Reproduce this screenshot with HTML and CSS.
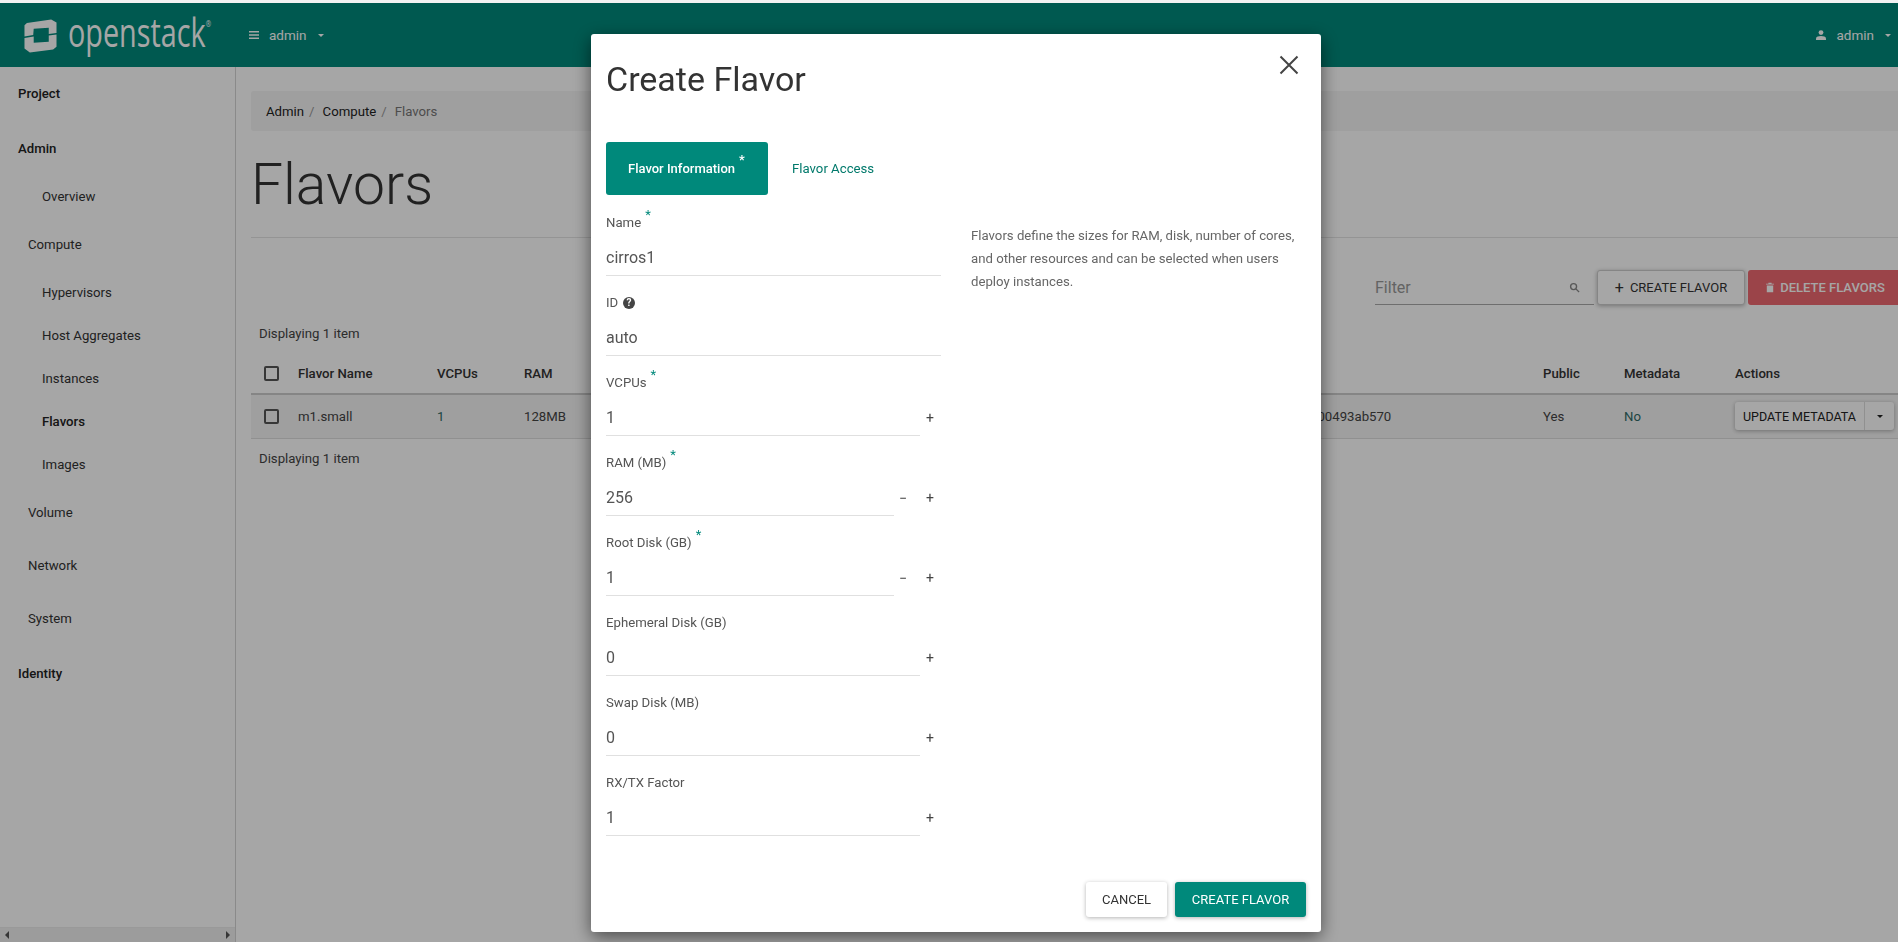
FILE: index.html
```html
<!DOCTYPE html>
<html>
<head>
  <title>Flavors - OpenStack Dashboard</title>
  <link rel="stylesheet" href="styles.css">
</head>
<body>

<div class="topstrip"></div>

<nav class="navbar">
  <a class="brand">
    <svg class="brand-icon" viewBox="0 0 34 35">
      <path d="M3 4.5 L28 1 L33.5 4 L33.5 15 L25.5 16 L25.5 9.5 L10 10.5 L9.5 17 L0.5 18.5 L0.5 7 Z"/>
      <path d="M0.5 20 L10 18.5 L10 25 L25.5 24 L25.5 17.5 L33.5 16.5 L33.5 29 L30 32 L6 35 L0.5 31 Z"/>
    </svg>
    <span class="brand-name">openstack<sup>&reg;</sup></span>
  </a>
  <a class="nav-link project-picker">
    <svg class="nav-icon" viewBox="0 0 10 8"><path d="M0 0h10v1.6H0zM0 3.2h10v1.6H0zM0 6.4h10V8H0z"/></svg>
    <span>admin</span>
    <i class="caret"></i>
  </a>
  <a class="nav-link user-menu">
    <svg class="nav-icon" viewBox="0 0 10 10"><circle cx="5" cy="2.6" r="2.4"/><path d="M0 10V8.4C0 6.8 2.6 6 5 6s5 .8 5 2.4V10z"/></svg>
    <span>admin</span>
    <i class="caret"></i>
  </a>
</nav>

<div class="wrapper">
  <aside class="sidebar">
    <ul class="side-nav">
      <li class="lvl0 first">Project</li>
      <li class="lvl0">Admin</li>
      <li class="lvl2 opener">Overview</li>
      <li class="lvl1">Compute</li>
      <li class="lvl2 opener">Hypervisors</li>
      <li class="lvl2">Host Aggregates</li>
      <li class="lvl2">Instances</li>
      <li class="lvl2 active">Flavors</li>
      <li class="lvl2">Images</li>
      <li class="lvl1">Volume</li>
      <li class="lvl1 wide">Network</li>
      <li class="lvl1 wide">System</li>
      <li class="lvl0">Identity</li>
    </ul>
    <div class="side-scroll">
      <i class="arrow-left"></i>
      <i class="arrow-right"></i>
    </div>
  </aside>

  <main class="content">
    <ol class="breadcrumb">
      <li>Admin</li>
      <li>Compute</li>
      <li class="current">Flavors</li>
    </ol>
    <h1 class="page-title">Flavors</h1>

    <div class="actions">
      <div class="filter">
        <span>Filter</span>
        <svg viewBox="0 0 24 24"><circle cx="10" cy="10" r="6.5"/><path d="M15 15l7 7"/></svg>
      </div>
      <button class="btn btn-create"><span class="plus">+</span>Create Flavor</button>
      <button class="btn btn-delete">
        <svg viewBox="0 0 10 12"><path d="M0 1.2h3V0h4v1.2h3v1.2H0zM1 3.4h8V12H1z"/></svg>
        Delete Flavors
      </button>
    </div>

    <p class="count">Displaying 1 item</p>

    <table class="flavors">
      <colgroup>
        <col class="c-check"><col class="c-name"><col class="c-vcpu"><col class="c-ram"><col class="c-under">
        <col class="c-id"><col class="c-pub"><col class="c-meta"><col class="c-act">
      </colgroup>
      <thead>
        <tr>
          <th><i class="check"></i></th>
          <th>Flavor Name</th>
          <th>VCPUs</th>
          <th>RAM</th>
          <th></th>
          <th></th>
          <th>Public</th>
          <th>Metadata</th>
          <th>Actions</th>
        </tr>
      </thead>
      <tbody>
        <tr>
          <td><i class="check"></i></td>
          <td>m1.small</td>
          <td class="num">1</td>
          <td>128MB</td>
          <td></td>
          <td class="id-cell"><span>900493ab570</span></td>
          <td>Yes</td>
          <td class="num">No</td>
          <td>
            <div class="split">
              <span class="split-main">Update Metadata</span>
              <span class="split-drop"><i class="caret"></i></span>
            </div>
          </td>
        </tr>
      </tbody>
    </table>

    <p class="count">Displaying 1 item</p>
  </main>
</div>

<div class="backdrop"></div>

<div class="modal">
  <header class="modal-head">
    <h2>Create Flavor</h2>
    <svg class="close" viewBox="0 0 20 20"><path d="M1.5 1.5l17 17M18.5 1.5l-17 17"/></svg>
  </header>

  <div class="tabs">
    <a class="tab active">Flavor Information<sup>*</sup></a>
    <a class="tab">Flavor Access</a>
  </div>

  <div class="modal-body">
    <form class="fields">
      <div class="field">
        <label>Name<sup>*</sup></label>
        <div class="control"><span class="value">cirros1</span></div>
      </div>
      <div class="field">
        <label>ID <svg class="help" viewBox="0 0 12 12"><circle cx="6" cy="6" r="6"/><text x="6" y="9.4" text-anchor="middle">?</text></svg></label>
        <div class="control"><span class="value">auto</span></div>
      </div>
      <div class="field">
        <label>VCPUs<sup>*</sup></label>
        <div class="control">
          <span class="value plus-only">1</span>
          <span class="stepper"><b>+</b></span>
        </div>
      </div>
      <div class="field">
        <label>RAM (MB)<sup>*</sup></label>
        <div class="control">
          <span class="value both">256</span>
          <span class="stepper"><b>&minus;</b><b>+</b></span>
        </div>
      </div>
      <div class="field">
        <label>Root Disk (GB)<sup>*</sup></label>
        <div class="control">
          <span class="value both">1</span>
          <span class="stepper"><b>&minus;</b><b>+</b></span>
        </div>
      </div>
      <div class="field">
        <label>Ephemeral Disk (GB)</label>
        <div class="control">
          <span class="value plus-only">0</span>
          <span class="stepper"><b>+</b></span>
        </div>
      </div>
      <div class="field">
        <label>Swap Disk (MB)</label>
        <div class="control">
          <span class="value plus-only">0</span>
          <span class="stepper"><b>+</b></span>
        </div>
      </div>
      <div class="field">
        <label>RX/TX Factor</label>
        <div class="control">
          <span class="value plus-only">1</span>
          <span class="stepper"><b>+</b></span>
        </div>
      </div>
    </form>
    <p class="help-text">Flavors define the sizes for RAM, disk, number of cores, and other resources and can be selected when users deploy instances.</p>
  </div>

  <footer class="modal-foot">
    <button class="btn btn-cancel">Cancel</button>
    <button class="btn btn-primary">Create Flavor</button>
  </footer>
</div>

</body>
</html>
```

FILE: styles.css
```css
* {
  margin: 0;
  padding: 0;
  box-sizing: border-box;
}

html, body {
  height: 100%;
  overflow: hidden;
}

body {
  font-family: Roboto, "Liberation Sans", sans-serif;
  font-size: 13.2px;
  color: #333;
  background-color: #fff;
  display: flex;
  flex-direction: column;
}

ul, ol {
  list-style: none;
}

i {
  display: block;
}

.topstrip {
  height: 3px;
  flex: none;
  background-color: #f2f2f2;
}

/* navbar */

.navbar {
  height: 64px;
  flex: none;
  display: flex;
  align-items: center;
  background-color: #00897b;
  color: #fff;
}

.brand {
  width: 249px;
  padding-left: 24px;
  display: flex;
  align-items: center;
  flex: none;
}

.brand-icon {
  width: 33px;
  height: 35px;
  fill: #fff;
  flex: none;
}

.brand-name {
  font-family: "Open Sans", sans-serif;
  font-size: 40px;
  line-height: 40px;
  margin-left: 11px;
  display: block;
  white-space: nowrap;
  transform: scaleX(.72);
  transform-origin: left center;
  position: relative;
  top: -3px;
}

.brand-name sup {
  font-size: 9px;
  vertical-align: 20px;
  line-height: 0;
}

.nav-link {
  display: flex;
  align-items: center;
  font-size: 13.5px;
}

.nav-icon {
  width: 10px;
  height: 10px;
  fill: #fff;
  margin-right: 10px;
}

.caret {
  width: 0;
  height: 0;
  border-left: 3px solid transparent;
  border-right: 3px solid transparent;
  border-top: 3px solid currentColor;
  margin-left: 11px;
}

.user-menu {
  margin-left: auto;
  padding-right: 7px;
}

/* sidebar */

.wrapper {
  flex: 1;
  display: flex;
  min-height: 0;
}

.sidebar {
  width: 236px;
  flex: none;
  display: flex;
  flex-direction: column;
  border-right: 1px solid #d4d4d4;
}

.side-nav {
  flex: 1;
  display: flex;
  flex-direction: column;
  padding-top: 17px;
}

.side-nav li {
  line-height: 20px;
  height: 20px;
}

.lvl0 {
  font-weight: 500;
  color: #222;
  padding-left: 18px;
  margin-top: 35px;
}

.lvl0.first {
  margin-top: 0;
}

.lvl1 {
  padding-left: 28px;
  margin-top: 28px;
}

.lvl1.wide {
  margin-top: 33px;
}

.lvl2 {
  padding-left: 42px;
  margin-top: 23px;
}

.lvl2.opener {
  margin-top: 28px;
}

.lvl2.active {
  font-weight: 500;
  color: #222;
}

.side-scroll {
  height: 15px;
  flex: none;
  display: flex;
  align-items: center;
  justify-content: space-between;
  padding: 0 5px;
  background-color: #f0f0f0;
  border-top: 1px solid #ececec;
}

.arrow-left, .arrow-right {
  width: 0;
  height: 0;
  border-top: 4px solid transparent;
  border-bottom: 4px solid transparent;
}

.arrow-left {
  border-right: 4px solid #555;
}

.arrow-right {
  border-left: 4px solid #555;
}

/* content */

.content {
  flex: 1;
  min-width: 0;
  padding: 24px 0 0 15px;
}

.breadcrumb {
  height: 40px;
  display: flex;
  align-items: center;
  padding-left: 15px;
  background-color: #f5f5f5;
  border-radius: 3px 0 0 3px;
  color: #222;
}

.breadcrumb li + li::before {
  content: "/";
  color: #999;
  padding: 0 8px 0 5px;
}

.breadcrumb .current {
  color: #777;
}

.page-title {
  font-size: 57px;
  font-weight: 300;
  line-height: 66px;
  padding: 21px 0 19px 0;
  border-bottom: 1px solid #e4e4e4;
  color: #333;
}

.actions {
  display: flex;
  justify-content: flex-end;
  align-items: stretch;
  height: 35px;
  margin-top: 32px;
  margin-right: -10px;
}

.filter {
  width: 219px;
  margin-right: 3px;
  display: flex;
  align-items: center;
  justify-content: space-between;
  font-size: 16px;
  color: #999;
  border-bottom: 1px solid #aaa;
}

.filter svg {
  width: 11px;
  height: 11px;
  fill: none;
  stroke: #888;
  stroke-width: 3;
  margin-right: 14px;
}

.btn {
  font-family: inherit;
  font-size: 13px;
  text-transform: uppercase;
  border: none;
  border-radius: 3px;
  background-color: #fff;
  color: #333;
  box-shadow: 0 1px 4px rgba(0, 0, 0, .3);
  display: flex;
  align-items: center;
  justify-content: center;
  white-space: nowrap;
}

.btn-create {
  width: 148px;
  margin-right: 3px;
  border: 1px solid #ccc;
}

.plus {
  font-size: 16px;
  margin-right: 6px;
  line-height: 1;
}

.btn-delete {
  width: 160px;
  padding-right: 5px;
  background-color: #ee6970;
  color: #fff;
  font-weight: 500;
  box-shadow: none;
}

.btn-delete svg {
  width: 8px;
  height: 11px;
  fill: #fff;
  margin-right: 6px;
}

.count {
  width: fit-content;
  padding-left: 8px;
  margin-top: 21px;
  line-height: 16px;
  color: #444;
}

.flavors {
  table-layout: fixed;
  width: 1647px;
  border-collapse: collapse;
  margin-top: 12px;
}

.c-check { width: 47px; }
.c-name { width: 139px; }
.c-vcpu { width: 87px; }
.c-ram { width: 100px; }
.c-under { width: 521px; }
.c-id { width: 398px; }
.c-pub { width: 81px; }
.c-meta { width: 111px; }
.c-act { width: 163px; }

.flavors th {
  height: 40px;
  text-align: left;
  font-weight: 500;
  color: #333;
  white-space: nowrap;
  border-bottom: 2px solid #ccc;
  vertical-align: middle;
}

.flavors td {
  height: 44px;
  background-color: #f5f5f5;
  border-bottom: 1px solid #ddd;
  color: #444;
  white-space: nowrap;
}

.flavors td.num {
  color: #2f6b66;
}

/* only the end of the id shows past the modal */
.flavors td.id-cell {
  padding-left: 165px;
}

.flavors th:first-child, .flavors td:first-child {
  padding-left: 13px;
}

.check {
  width: 15px;
  height: 15px;
  border: 2px solid #555;
  border-radius: 2px;
}

.split {
  width: 159px;
  height: 28px;
  display: flex;
  border-radius: 3px;
  background-color: #fff;
  color: #222;
  box-shadow: 0 1px 4px rgba(0, 0, 0, .3);
  text-transform: uppercase;
  font-size: 12.5px;
}

.split-main {
  width: 130px;
  display: flex;
  align-items: center;
  justify-content: center;
  border-right: 1px solid #ddd;
}

.split-drop {
  flex: 1;
  display: flex;
  align-items: center;
  justify-content: center;
}

.split-drop .caret {
  margin-left: 0;
}

.flavors + .count {
  margin-top: 12px;
}

/* modal */

.backdrop {
  position: fixed;
  top: 3px;
  left: 0;
  right: 0;
  bottom: 0;
  background-color: rgba(0, 0, 0, .35);
}

.modal {
  position: fixed;
  top: 34px;
  left: 591px;
  width: 730px;
  height: 898px;
  display: flex;
  flex-direction: column;
  padding: 0 15px;
  background-color: #fff;
  border-radius: 3px;
  box-shadow: 0 5px 18px rgba(0, 0, 0, .55);
}

.modal-head {
  height: 108px;
  flex: none;
  display: flex;
  justify-content: space-between;
  align-items: flex-start;
}

.modal-head h2 {
  font-size: 34px;
  font-weight: 400;
  line-height: 40px;
  margin-top: 25px;
  color: #333;
}

.close {
  width: 20px;
  height: 20px;
  margin-top: 21px;
  margin-right: 7px;
  fill: none;
  stroke: #444;
  stroke-width: 2;
}

.tabs {
  display: flex;
  height: 53px;
  flex: none;
}

.tab {
  display: flex;
  align-items: center;
  padding: 0 24px;
  color: #00796b;
}

.tab.active {
  width: 162px;
  padding: 0 0 0 22px;
  background-color: #00897b;
  color: #fff;
  border-radius: 3px;
  font-weight: 500;
  font-size: 13px;
}

sup {
  line-height: 0;
}

.tab sup {
  font-size: 13px;
  margin-left: 4px;
  position: relative;
  top: -9px;
}

.modal-body {
  flex: 1;
  display: flex;
  min-height: 0;
}

.fields {
  width: 365px;
  flex: none;
  padding-top: 2px;
}

.field {
  padding-top: 16px;
}

.field label {
  display: block;
  line-height: 20px;
  height: 20px;
  color: #555;
}

.field label sup {
  color: #00897b;
  font-size: 13px;
  margin-left: 4px;
  position: relative;
  top: -3px;
}

.help {
  width: 12px;
  height: 12px;
  vertical-align: -2px;
  margin-left: 1px;
  fill: #444;
}

.help text {
  font-size: 10px;
  font-weight: 700;
  fill: #fff;
}

.control {
  display: flex;
  align-items: flex-start;
  height: 44px;
  width: 335px;
}

.value {
  flex: 1;
  height: 43px;
  font-size: 16px;
  line-height: 39px;
  padding-top: 5px;
  color: #555;
  border-bottom: 1px solid #e0e0e0;
}

.value.plus-only {
  flex: none;
  width: 314px;
}

.value.both {
  flex: none;
  width: 288px;
}

.stepper {
  flex: 1;
  height: 44px;
  display: flex;
  padding-top: 5px;
  align-items: center;
  justify-content: flex-end;
  padding-right: 7px;
  gap: 19px;
}

.stepper b {
  font-weight: 400;
  font-size: 14px;
  color: #444;
  width: 8px;
  text-align: center;
}

.help-text {
  width: 332px;
  padding-top: 29px;
  line-height: 23px;
  color: #666;
}

.modal-foot {
  height: 50px;
  flex: none;
  display: flex;
  justify-content: flex-end;
  align-items: flex-start;
  gap: 8px;
}

.modal-foot .btn {
  height: 35px;
}

.btn-cancel {
  width: 81px;
}

.btn-primary {
  width: 131px;
  background-color: #00897b;
  color: #fff;
}
```
